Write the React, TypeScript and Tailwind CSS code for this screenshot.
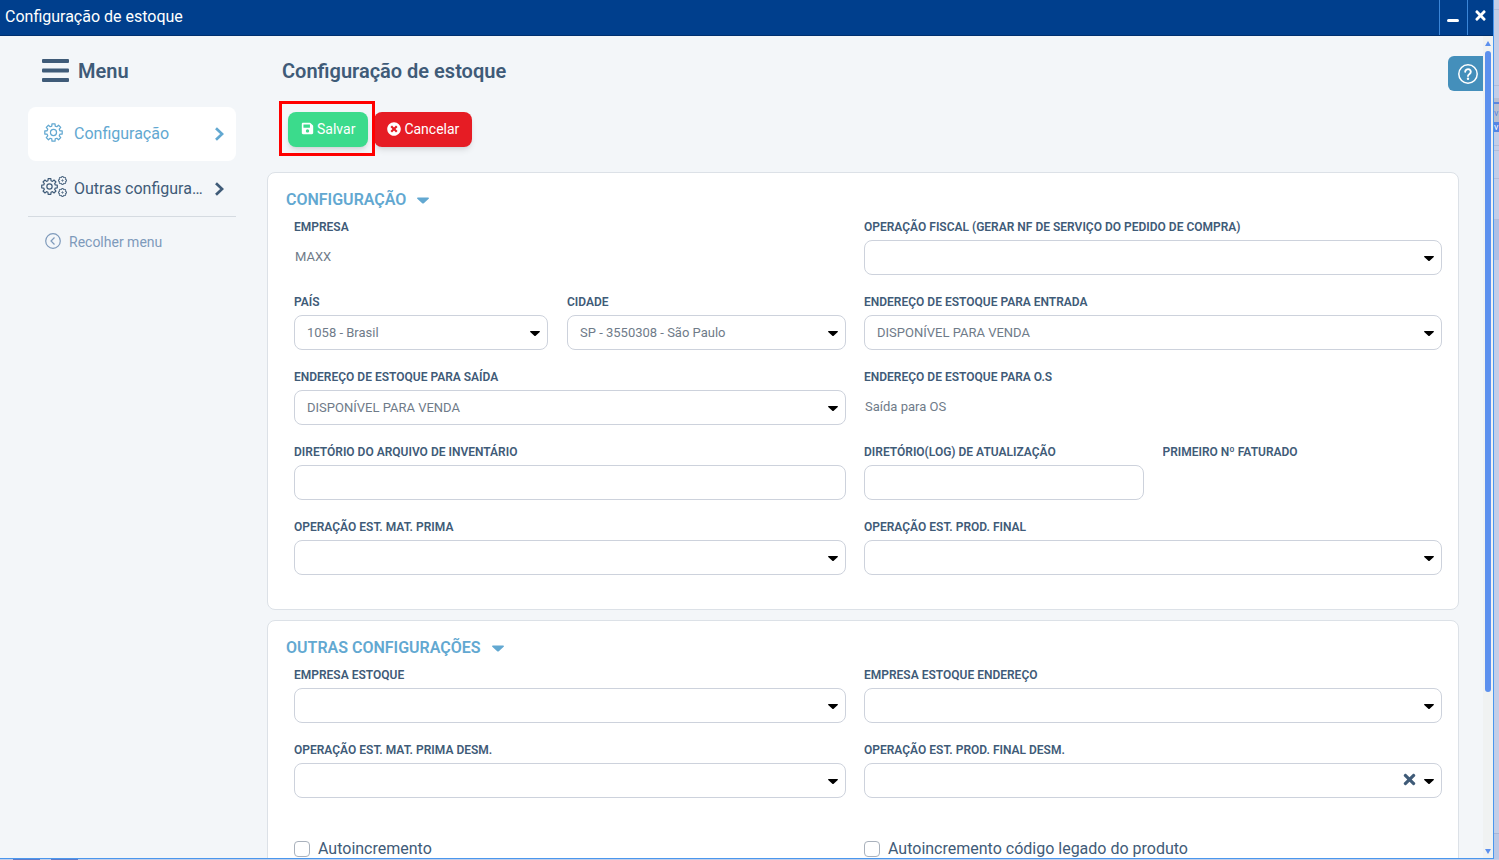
import { useState, type ReactNode } from "react";
import { FaSave, FaTimes, FaTimesCircle } from "react-icons/fa";

// Outline of a cog with eight teeth, centred on a 20x20 box
function cogPath(outer: number, inner: number) {
  const points: string[] = [];
  for (let i = 0; i < 8; i++) {
    const mid = i * 45;
    for (const [angle, r] of [[-15, inner], [-10, outer], [10, outer], [15, inner]]) {
      const rad = ((mid + angle) * Math.PI) / 180;
      points.push(`${(10 + r * Math.sin(rad)).toFixed(2)} ${(10 - r * Math.cos(rad)).toFixed(2)}`);
    }
  }
  return `M${points.join("L")}Z`;
}

const COG = cogPath(9.3, 7);

function Cog({ className, stroke, hub }: { className: string; stroke: number; hub: number }) {
  return (
    <svg viewBox="0 0 20 20" className={className} fill="none" stroke="currentColor" strokeWidth={stroke} strokeLinejoin="round" aria-hidden="true">
      <path d={COG} />
      <circle cx="10" cy="10" r={hub} />
    </svg>
  );
}

function Cogs() {
  return (
    <span className="mb-1 flex w-[26px] shrink-0 items-center">
      <Cog className="size-[17px] shrink-0" stroke={1.4} hub={3.1} />
      <span className="flex flex-col gap-[3px]">
        <Cog className="size-[9px]" stroke={2.2} hub={1.4} />
        <Cog className="size-[9px]" stroke={2.2} hub={1.4} />
      </span>
    </span>
  );
}

function Chevron() {
  return (
    <svg viewBox="0 0 10 14" className="mr-3 ml-auto h-[14px] w-[10px] shrink-0" fill="none" stroke="currentColor" strokeWidth="2.700" aria-hidden="true">
      <path d="M2 1.200 8.100 7 2 12.800" />
    </svg>
  );
}

function Caret({ className }: { className: string }) {
  return (
    <svg viewBox="0 0 12 6" className={className} fill="currentColor" aria-hidden="true">
      <path d="M.8 0h10.400c.7 0 1 .8.5 1.200L6.800 5.700a1.200 1.200 0 0 1-1.600 0L.3 1.200C-.2.800.1 0 .8 0z" />
    </svg>
  );
}

const labelClass = "block truncate text-xs/[18px] font-semibold text-[#3f5b78]";
const boxClass =
  "block h-[35px] w-full rounded-lg border border-[#cdd2dc] bg-white px-3 text-[13px] text-[#6f7b89]";

function SelectField({ id, label, value = "", clearable }: { id: string; label: string; value?: string; clearable?: boolean }) {
  return (
    <div className="min-w-0">
      <label htmlFor={id} className={labelClass}>{label}</label>
      <div className="relative mt-1">
        <select id={id} defaultValue={value} className={`${boxClass} appearance-none`}>
          <option value={value}>{value}</option>
        </select>
        {clearable && (
          <button type="button" aria-label="Limpar" className="absolute top-2 right-6 text-[#3f5b78]">
            <FaTimes size={17} />
          </button>
        )}
        <Caret className="pointer-events-none absolute top-4 right-2 h-[5px] w-[10px] text-black" />
      </div>
    </div>
  );
}

function TextField({ id, label }: { id: string; label: string }) {
  return (
    <div className="min-w-0">
      <label htmlFor={id} className={labelClass}>{label}</label>
      <input id={id} type="text" className={`${boxClass} mt-1`} />
    </div>
  );
}

function ReadOnlyField({ label, value }: { label: string; value?: string }) {
  return (
    <div className="min-w-0">
      <span className={labelClass}>{label}</span>
      <p className="mt-1 h-[35px] px-px text-[13px]/[33px] text-[#6f7b89]">{value}</p>
    </div>
  );
}

function CheckField({ id, label }: { id: string; label: string }) {
  return (
    <div className="mt-[21px] flex h-6 items-center gap-2">
      <input id={id} type="checkbox" className="size-4 appearance-none rounded-[4px] border border-[#a9b1bc] bg-white checked:bg-[#62a8d1]" />
      <label htmlFor={id} className="text-base text-[#3f5b78]">{label}</label>
    </div>
  );
}

function Section({ title, children }: { title: string; children: ReactNode }) {
  const [open, setOpen] = useState(true);

  return (
    <section className="rounded-lg border border-[#dce1e7] bg-white pt-[15px] pr-4 pb-[34px] pl-[18px]">
      <h2>
        <button
          type="button"
          aria-expanded={open}
          onClick={() => setOpen(!open)}
          className="flex h-6 items-center gap-[11px] text-base font-semibold text-[#62a8d1]"
        >
          {title}
          <Caret className="h-[7px] w-3" />
        </button>
      </h2>
      {open && (
        <div className="mt-[6px] grid grid-cols-[552fr_578fr] gap-[18px] pl-2">
          {children}
        </div>
      )}
    </section>
  );
}

function Sidebar() {
  return (
    <nav className="ml-7 w-[208px] shrink-0 pt-[18px] text-[#3f5b78]">
      <div className="flex h-[34px] items-center gap-[9px] pl-[14px]">
        <svg viewBox="0 0 27 24" className="h-6 w-[27px]" fill="currentColor" aria-hidden="true">
          <rect width="27" height="4" rx="1" />
          <rect y="9.500" width="27" height="4" rx="1" />
          <rect y="19" width="27" height="4" rx="1" />
        </svg>
        <span className="text-xl font-semibold">Menu</span>
      </div>
      <a href="#configuracao" className="mt-[19px] flex h-[54px] items-center rounded-lg bg-white pl-4 text-[#62a8d1]">
        <Cog className="mb-1 size-[19px] shrink-0" stroke={1.3} hub={3.2} />
        <span className="ml-[11px]">Configuração</span>
        <Chevron />
      </a>
      <a href="#outras" className="flex h-14 items-center border-b border-[#d5dbe1] pl-[13px]">
        <Cogs />
        <span className="ml-[7px] w-[129px] truncate">Outras configurações</span>
        <Chevron />
      </a>
      <button type="button" className="mt-[13px] flex h-6 items-center gap-2 pl-[17px] text-sm text-[#7e9abb]">
        <svg viewBox="0 0 16 16" className="mb-0.5 size-4" fill="none" stroke="currentColor" strokeWidth="1.200" aria-hidden="true">
          <circle cx="8" cy="8" r="7.300" />
          <path d="M9.500 4.500 6 8l3.500 3.500" />
        </svg>
        Recolher menu
      </button>
    </nav>
  );
}

function ScrollRail() {
  return (
    <div className="flex w-[10px] shrink-0 flex-col items-center gap-[5px] bg-[#f0f2f2] pt-[5px] pb-1">
      <svg viewBox="0 0 6 5" className="h-[5px] w-[6px]" fill="#5c90ee" aria-hidden="true"><path d="M3 0l3 5H0z" /></svg>
      <div className="w-[6px] flex-[641] rounded-full bg-[#5c90ee]" />
      <div className="flex-[147]" />
      <svg viewBox="0 0 6 5" className="h-[5px] w-[6px]" fill="#5c90ee" aria-hidden="true"><path d="M3 5l3-5H0z" /></svg>
    </div>
  );
}

// Sliver of the page that stays visible behind the window
function Backdrop() {
  return (
    <div className="flex w-[5px] shrink-0 flex-col text-[9px]/[10px] text-[#5c86de]">
      <div className="h-[10px] border-b border-[#b3bdd8]" />
      <div className="h-[76px] border-b border-[#b3bdd8]" />
      <div className="h-3" />
      <div className="h-[10px] bg-[#b7bfd2] pt-1"><div className="h-0.5 bg-[#5c86de]" /></div>
      <div className="h-[14px] bg-[#b7bfd2]">v</div>
      <div className="h-[10px] bg-[#5585e4] text-white">v</div>
      <div className="h-[14px] border-b border-[#b3bdd8]" />
      <div className="h-[5px] border-b border-[#b3bdd8]" />
      <div className="h-7 border-b border-[#b3bdd8]" />
      <div className="h-[41px] border-b border-[#b3bdd8]" />
      <div className="h-10 bg-[#afc0e6]" />
      <div className="flex-1" />
      <div className="h-[26px] border-t border-[#a9b6d8] bg-[#bac8e6]" />
    </div>
  );
}

export default function App() {
  return (
    <div className="flex h-screen flex-col overflow-hidden bg-[#c3cee8] font-['Roboto',sans-serif]">
      <div className="flex min-h-0 flex-1">
        <div className="flex min-w-0 flex-1 flex-col border-r border-b border-[#4a97ee] bg-[#f3f6f9]">
          <header className="flex h-9 shrink-0 border-b border-[#00306f] bg-[#003f8d] text-white">
            <h1 className="flex-1 pl-[5px] text-base/[33px]">Configuração de estoque</h1>
            <button type="button" aria-label="Minimizar" className="flex w-7 justify-center border-l border-[#3b86d8] pt-[19px] pr-px">
              <span className="h-[3px] w-3 rounded-sm bg-white" />
            </button>
            <button type="button" aria-label="Fechar" className="flex w-[26px] justify-center border-l border-[#3b86d8] pt-2 pr-px">
              <FaTimes size={15} />
            </button>
          </header>

          <div className="flex min-h-0 flex-1">
            <Sidebar />
            <main className="relative min-w-0 flex-1 overflow-hidden pt-[18px] pr-6 pl-[31px]">
              <h1 className="pl-[15px] text-xl/[34px] font-semibold text-[#3f5b78]">Configuração de estoque</h1>
              <button type="button" aria-label="Ajuda" className="absolute top-5 right-0 flex h-[35px] w-[35px] items-center justify-center rounded-l-md bg-[#448fbb] pl-1 text-white">
                <svg viewBox="0 0 20 20" className="size-5" fill="none" stroke="currentColor" strokeLinecap="round" aria-hidden="true">
                  <circle cx="10" cy="10" r="9.200" strokeWidth="1.500" />
                  <path d="M7.200 7.800a2.800 2.600 0 1 1 4.400 2.100c-1 .7-1.600 1.100-1.600 2.100" strokeWidth="1.900" />
                  <circle cx="10" cy="14.800" r="1.200" fill="currentColor" stroke="none" />
                </svg>
              </button>

              <div className="mt-[13px] mb-4 flex items-start pl-3">
                <div className="z-10 border-3 border-[#ff0000] pt-2 pr-1 pb-[6px] pl-[6px]">
                  <button type="button" className="flex h-[35px] items-center gap-[3px] rounded-lg bg-[#3bdb8c] px-[13px] pb-0.5 text-sm text-white shadow-md">
                    <FaSave size={13} /> Salvar
                  </button>
                </div>
                <button type="button" className="mt-[11px] -ml-px flex h-[35px] items-center gap-[3px] rounded-lg bg-[#e61c24] px-[13px] pb-0.5 text-sm text-white shadow-md">
                  <FaTimesCircle size={14} /> Cancelar
                </button>
              </div>

              <div className="flex flex-col gap-[10px]">
                <Section title="CONFIGURAÇÃO">
                  <ReadOnlyField label="EMPRESA" value="MAXX" />
                  <SelectField id="operacao-fiscal" label="OPERAÇÃO FISCAL (GERAR NF DE SERVIÇO DO PEDIDO DE COMPRA)" />
                  <div className="grid grid-cols-[254fr_279fr] gap-[19px]">
                    <SelectField id="pais" label="PAÍS" value="1058 - Brasil" />
                    <SelectField id="cidade" label="CIDADE" value="SP - 3550308 - São Paulo" />
                  </div>
                  <SelectField id="end-entrada" label="ENDEREÇO DE ESTOQUE PARA ENTRADA" value="DISPONÍVEL PARA VENDA" />
                  <SelectField id="end-saida" label="ENDEREÇO DE ESTOQUE PARA SAÍDA" value="DISPONÍVEL PARA VENDA" />
                  <ReadOnlyField label="ENDEREÇO DE ESTOQUE PARA O.S" value="Saída para OS" />
                  <TextField id="dir-inventario" label="DIRETÓRIO DO ARQUIVO DE INVENTÁRIO" />
                  <div className="grid grid-cols-2 gap-[19px]">
                    <TextField id="dir-log" label="DIRETÓRIO(LOG) DE ATUALIZAÇÃO" />
                    <ReadOnlyField label="PRIMEIRO Nº FATURADO" />
                  </div>
                  <SelectField id="op-mat-prima" label="OPERAÇÃO EST. MAT. PRIMA" />
                  <SelectField id="op-prod-final" label="OPERAÇÃO EST. PROD. FINAL" />
                </Section>

                <Section title="OUTRAS CONFIGURAÇÕES">
                  <SelectField id="empresa-estoque" label="EMPRESA ESTOQUE" />
                  <SelectField id="empresa-estoque-end" label="EMPRESA ESTOQUE ENDEREÇO" />
                  <SelectField id="op-mat-prima-desm" label="OPERAÇÃO EST. MAT. PRIMA DESM." />
                  <SelectField id="op-prod-final-desm" label="OPERAÇÃO EST. PROD. FINAL DESM." clearable />
                  <CheckField id="autoincremento" label="Autoincremento" />
                  <CheckField id="autoincremento-legado" label="Autoincremento código legado do produto" />
                </Section>
              </div>
            </main>
            <ScrollRail />
          </div>
        </div>
        <Backdrop />
      </div>
      <div className="flex h-px shrink-0 gap-[11px] pl-[13px]">
        <div className="w-[27px] bg-[#5f7cc8]" />
        <div className="w-[27px] bg-[#5f7cc8]" />
      </div>
    </div>
  );
}
